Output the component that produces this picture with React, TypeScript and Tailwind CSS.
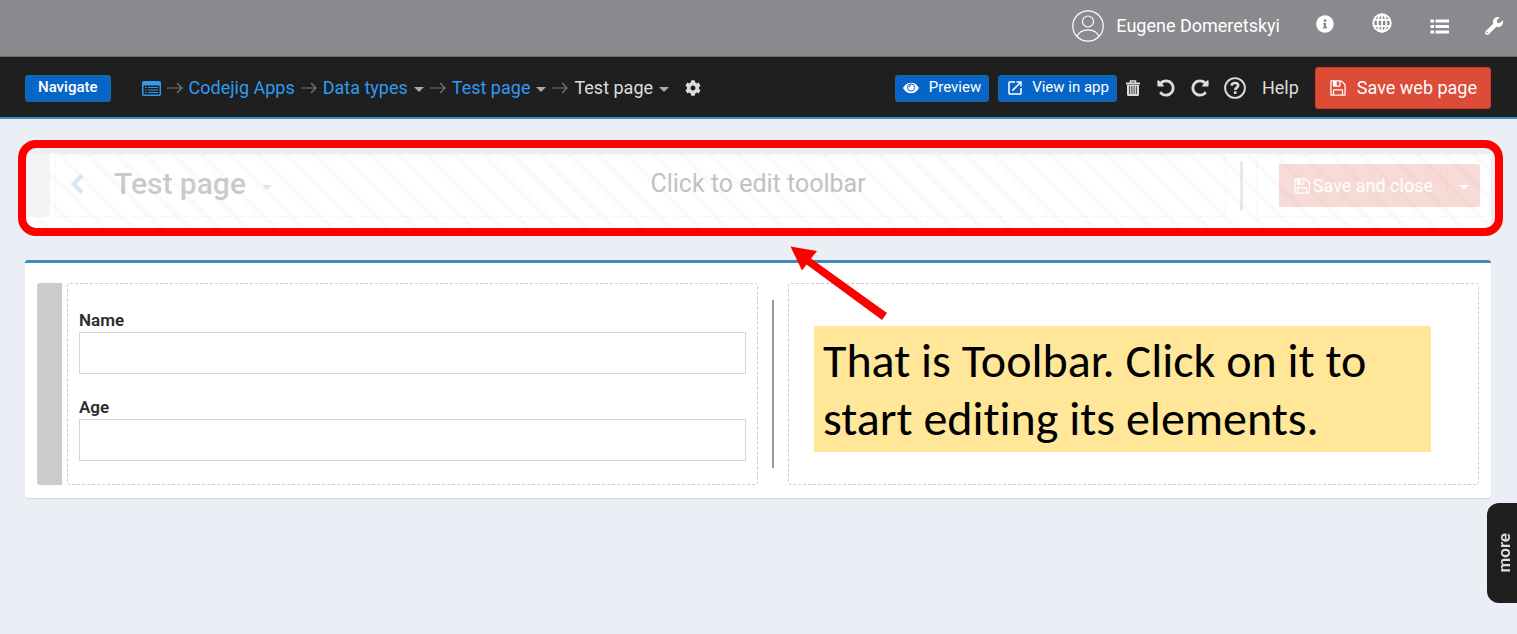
import type { ReactNode } from "react";
import { FaCog, FaInfoCircle, FaWrench } from "react-icons/fa";
import { MdOpenInNew } from "react-icons/md";

const SAVE_PATH =
  "M512 1536h768v-384h-768v384zm896 0h128v-896q0-14-10-38.5t-20-34.5l-281-281q-10-10-34-20t-39-10v416q0 40-28 68t-68 28h-576q-40 0-68-28t-28-68v-416h-128v1280h128v-416q0-40 28-68t68-28h832q40 0 68 28t28 68v416zm-384-928v-320q0-13-9.5-22.5t-22.5-9.5h-192q-13 0-22.5 9.5t-9.5 22.5v320q0 13 9.5 22.5t22.5 9.5h192q13 0 22.5-9.5t9.5-22.5zm640 32v928q0 40-28 68t-68 28h-1344q-40 0-68-28t-28-68v-1344q0-40 28-68t68-28h928q40 0 88 20t76 48l280 280q28 28 48 76t20 88z";

const UNDO_PATH =
  "M1664 896q0 156-61 298t-164 245-245 164-298 61q-172 0-327-72.5t-264-204.5q-7-10-6.5-22.5t8.5-20.5l137-138q10-9 25-9 16 2 23 12 73 95 179 147t225 52q104 0 198.5-40.5t163.5-109.5 109.5-163.5 40.5-198.5-40.5-198.5-109.5-163.5-163.5-109.5-198.5-40.5q-98 0-188 35.5t-160 101.5l137 138q31 30 14 69-17 40-59 40h-448q-26 0-45-19t-19-45v-448q0-42 40-59 39-17 69 14l130 129q107-101 244.5-156.5t284.5-55.5q156 0 298 61t245 164 164 245 61 298z";

function SaveIcon({ className }: { className?: string }) {
  return (
    <svg viewBox="0 0 1792 1792" fill="currentColor" className={className}>
      <path d={SAVE_PATH} />
    </svg>
  );
}

function UndoIcon({ className }: { className?: string }) {
  return (
    <svg viewBox="0 0 1792 1792" fill="currentColor" className={className}>
      <path d={UNDO_PATH} />
    </svg>
  );
}

function ListAltIcon() {
  return (
    <svg viewBox="0 0 19 15" className="h-[15px] w-[19px]">
      <rect x="0.75" y="0.75" width="17.5" height="13.5" rx="1" fill="none" stroke="currentColor" strokeWidth="1.5" />
      <path d="M1 1h17v3.5H1z" fill="currentColor" />
      <path d="M3 6.5h1.5M6 6.5h10M3 9h1.5M6 9h10M3 11.5h1.5M6 11.5h10" stroke="currentColor" strokeWidth="1.2" />
    </svg>
  );
}

function EyeIcon() {
  return (
    <svg viewBox="0 0 16 12" className="h-3 w-4">
      <path d="M0 6C2 2.5 4.8 0.8 8 0.8S14 2.5 16 6C14 9.5 11.2 11.2 8 11.2S2 9.5 0 6z" fill="currentColor" />
      <circle cx="8" cy="5.5" r="3.6" fill="none" stroke="#0865c8" strokeWidth="1" />
      <path d="M6 5.5A2 2 0 0 1 8 3.5" fill="none" stroke="#0865c8" strokeWidth="0.9" />
    </svg>
  );
}

function GlobeIcon() {
  return (
    <svg viewBox="0 0 20 20" className="size-5" fill="none" stroke="currentColor">
      <circle cx="10" cy="10" r="8.7" strokeWidth="2" />
      <ellipse cx="10" cy="10" rx="4.3" ry="8.7" strokeWidth="1.8" />
      <path d="M10 1v18M1.5 6.8h17M1.5 13.2h17" strokeWidth="1.8" />
    </svg>
  );
}

function ListIcon() {
  return (
    <svg viewBox="0 0 19 15" className="h-[15px] w-[19px]" fill="none" stroke="currentColor" strokeWidth="3">
      <path d="M0.5 2h3.500M5.500 2H19M0.5 7.500h3.500M5.500 7.500H19M0.5 13h3.500M5.500 13H19" />
    </svg>
  );
}

function TrashIcon() {
  return (
    <svg viewBox="0 0 14 16" className="h-4 w-3.5">
      <path d="M0 3.5h14" stroke="currentColor" strokeWidth="2" />
      <path d="M4.500 3V1h5v2" fill="none" stroke="currentColor" strokeWidth="1.5" />
      <path
        d="M1 5h12v9.500a1.500 1.500 0 0 1-1.500 1.500h-9A1.500 1.500 0 0 1 1 14.500zM3.300 6v8h0.800V6zM5.500 6v8h0.800V6zM7.700 6v8h0.800V6zM9.900 6v8h0.800V6z"
        fill="currentColor"
        fillRule="evenodd"
      />
    </svg>
  );
}

function HelpIcon() {
  return (
    <svg viewBox="0 0 22 22" className="size-[22px]" fill="none" stroke="currentColor">
      <circle cx="11" cy="11" r="9.9" strokeWidth="1.9" />
      <path d="M7.600 8.600C7.800 6.800 9.200 6 11 6c1.900 0 3.200 1 3.200 2.500 0 2.100-3 2.200-3 4.500" strokeWidth="2.6" />
      <path d="M11.200 14.300v2.600" strokeWidth="2.8" />
    </svg>
  );
}

function UserIcon() {
  return (
    <svg viewBox="0 0 32 32" className="size-8" fill="none" stroke="currentColor" strokeWidth="1.2">
      <circle cx="16" cy="16" r="15.2" />
      <circle cx="16" cy="11.5" r="5.5" />
      <path d="M5 26.500C7 22 11 19.800 16 19.800S25 22 27 26.500" />
    </svg>
  );
}

function Caret({ className }: { className?: string }) {
  return (
    <svg viewBox="0 0 10 5" className={className} fill="currentColor">
      <path d="M0 0h10L5 5z" />
    </svg>
  );
}

function Arrow() {
  return (
    <svg viewBox="0 0 16 12" className="mx-1.5 h-3 w-4 text-[#777]" fill="none" stroke="currentColor" strokeWidth="1.2">
      <path d="M0 6h15M10 1l5 5-5 5" />
    </svg>
  );
}

function Crumb({ children, caret }: { children: ReactNode; caret?: boolean }) {
  return (
    <>
      <Arrow />
      <a href="#" className="text-[#2f9bf0]">
        {children}
      </a>
      {caret && <Caret className="mt-0.5 ml-1.5 h-[5px] w-2.5 text-[#aaa]" />}
    </>
  );
}

function TextField({ id, label }: { id: string; label: string }) {
  return (
    <div>
      <label htmlFor={id} className="block text-[17px] leading-6 font-semibold text-[#2b2b2b]">
        {label}
      </label>
      <input id={id} type="text" className="block h-[42px] w-full border border-[#d2d6de] bg-white px-3 text-base" />
    </div>
  );
}

export default function App() {
  return (
    <div className="min-h-screen overflow-x-hidden bg-[#ebeef4] font-[Roboto,sans-serif] text-lg">
      <header className="flex h-[57px] items-center justify-end border-b border-[#6d6e70] bg-[#898a8d] pr-3.5 pb-1 text-white">
        <UserIcon />
        <span className="ml-3">Eugene Domeretskyi</span>
        <button aria-label="Information" className="ml-9 pb-1">
          <FaInfoCircle className="size-[18px]" />
        </button>
        <button aria-label="Language" className="ml-[38px] pb-1.5">
          <GlobeIcon />
        </button>
        <button aria-label="List" className="ml-[38px]">
          <ListIcon />
        </button>
        <button aria-label="Settings" className="ml-9">
          <FaWrench className="size-[18px]" />
        </button>
      </header>

      <nav className="flex h-[62px] items-center border-b-2 border-[#3c8dbc] bg-[#1f1f1f] pt-0.5 pr-[26px] pl-[25px] text-[#ddd]">
        <button className="h-[27px] rounded-[3px] border border-[#1c6a9c] bg-[#0865c8] px-3 text-[15px] font-medium text-white">
          Navigate
        </button>
        <a href="#" aria-label="Home" className="ml-[31px] text-[#2f9bf0]">
          <ListAltIcon />
        </a>
        <Crumb>Codejig Apps</Crumb>
        <Crumb caret>Data types</Crumb>
        <Crumb caret>Test page</Crumb>
        <Arrow />
        <span>Test page</span>
        <Caret className="mt-0.5 ml-1.5 h-[5px] w-2.5 text-[#aaa]" />
        <button aria-label="Page settings" className="ml-4">
          <FaCog className="size-4" />
        </button>

        <div className="ml-auto flex items-center">
          <button className="flex h-[27px] items-center gap-2.5 rounded-[3px] border border-[#1c6a9c] bg-[#0865c8] px-[7px] text-[15px] text-white">
            <EyeIcon />
            Preview
          </button>
          <button className="ml-[9px] flex h-[27px] items-center gap-2 rounded-[3px] border border-[#1c6a9c] bg-[#0865c8] px-[7px] text-[15px] text-white">
            <MdOpenInNew className="size-[18px]" />
            View in app
          </button>
          <button aria-label="Delete" className="ml-[9px]">
            <TrashIcon />
          </button>
          <button aria-label="Undo" className="ml-4">
            <UndoIcon className="size-5" />
          </button>
          <button aria-label="Redo" className="ml-3.5">
            <UndoIcon className="size-5 -scale-x-100" />
          </button>
          <a href="#" className="ml-3.5 flex items-center gap-4">
            <HelpIcon />
            Help
          </a>
          <button className="ml-4 flex h-[42px] items-center gap-2.5 rounded-[3px] border border-[#d73925] bg-[#dd4b39] px-[13px] text-white">
            <SaveIcon className="size-[18px]" />
            Save web page
          </button>
        </div>
      </nav>

      <main className="pt-[35px] pr-[26px] pb-12 pl-[25px]">
        <section className="relative h-[75px] bg-white bg-[repeating-linear-gradient(45deg,transparent_0,transparent_14px,rgba(0,0,0,0.018)_16px,rgba(0,0,0,0.018)_19px,transparent_20px)]">
          <div className="flex h-[63px]">
            <div className="w-[25px] bg-[#f4f4f4]" />
            <div className="ml-[5px] flex flex-1 opacity-20">
              <div className="flex flex-1 items-center rounded-[3px] border border-dashed border-[#ccc] pb-1 pl-3.5">
                <button aria-label="Back" className="text-[#3c8dbc]">
                  <svg viewBox="0 0 14 20" className="h-5 w-3.5" fill="none" stroke="currentColor" strokeWidth="4.5">
                    <path d="M12 1.500L3.500 10l8.500 8.500" />
                  </svg>
                </button>
                <h1 className="ml-[30px] text-[30px] leading-8 font-medium">Test page</h1>
                <Caret className="mt-2 ml-4 h-[5px] w-2.5 text-[#3c8dbc]" />
              </div>
              <div className="flex w-[30px] items-center justify-center">
                <div className="h-[50px] w-[3px] bg-[#999]" />
              </div>
              <div className="flex w-[235px] items-center justify-end rounded-[3px] border border-dashed border-[#ccc] pr-2.5">
                <button className="flex h-[43px] items-center gap-0.5 border-r border-[#d73925] bg-[#dd4b39] px-3.5 text-white">
                  <SaveIcon className="size-[18px]" />
                  Save and close
                </button>
                <button aria-label="More save options" className="flex h-[43px] w-8 items-center justify-center rounded-r-[3px] bg-[#dd4b39] text-white">
                  <Caret className="mt-1 h-[5px] w-2.5" />
                </button>
              </div>
            </div>
          </div>
          <button className="absolute inset-0 pb-3.5 text-[25px] text-[#c2c2c2]">Click to edit toolbar</button>
          <div className="pointer-events-none absolute -top-3.5 -right-3 -bottom-[7px] -left-[7px] rounded-[18px] border-8 border-[#f00]" />
        </section>

        <section className="mt-[31px] flex rounded-[3px] border-t-3 border-[#3c8dbc] bg-white px-3 pt-5 pb-[13px] shadow-[0_1px_1px_rgba(0,0,0,0.1)]">
          <div className="w-[25px] rounded-l-[3px] bg-[#ccc]" />
          <div className="ml-[5px] grid flex-1 grid-cols-[minmax(0,1fr)_30px_minmax(0,1fr)]">
            <div className="flex flex-col gap-[21px] rounded-[3px] border border-dashed border-[#ccc] px-[11px] pt-6 pb-[23px]">
              <TextField id="name" label="Name" />
              <TextField id="age" label="Age" />
            </div>
            <div className="flex items-center justify-center">
              <div className="h-[168px] w-0.5 bg-[#999]" />
            </div>
            <div className="relative rounded-[3px] border border-dashed border-[#ccc]">
              <svg viewBox="0 0 100 76" className="absolute -top-[38px] left-0 h-[76px] w-[100px]">
                <path d="M1.500 0.500L28 5l-6 7.500L98 67l-5 7L17.500 18.500L13 24.500z" fill="#f00" />
              </svg>
              <p className="absolute top-[42px] left-[25px] w-[617px] bg-[#ffe699] px-[9px] pt-1.5 pb-1 font-[Carlito,Lato,sans-serif] text-5xl leading-[58px] whitespace-nowrap text-black [font-variant-ligatures:none]">
                That is Toolbar. Click on it to
                <br />
                start editing its elements.
              </p>
            </div>
          </div>
        </section>
      </main>

      <button className="fixed right-0 bottom-[31px] flex h-[100px] w-[30px] items-center justify-center rounded-l-xl bg-[#1f1f1f] pl-1 text-[17px] font-semibold text-[#ddd]">
        <span className="rotate-180 [writing-mode:vertical-rl]">more</span>
      </button>
    </div>
  );
}
